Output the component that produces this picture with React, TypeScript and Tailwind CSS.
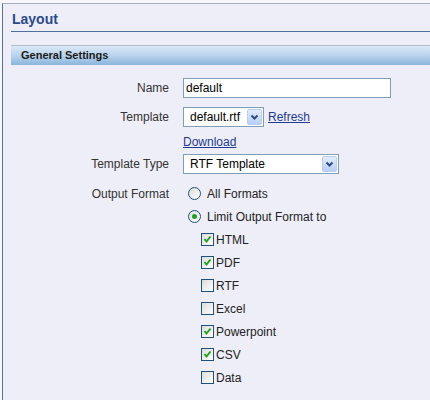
import React from 'react';

const font = { fontFamily: '"Liberation Sans", Arial, sans-serif' };

const Chevron = () => (
  <svg width="9" height="7" viewBox="0 0 9 7">
    <polyline points="1.5,1.5 4.5,4.5 7.5,1.5" fill="none" stroke="#2d4a86" strokeWidth="2" />
  </svg>
);

const DropButton = () => (
  <div className="w-[15px] h-[16px] mr-[1px] flex items-center justify-center border border-[#b8cdf0] bg-gradient-to-b from-[#e2ecfd] to-[#b9cff5] rounded-[2px]">
    <Chevron />
  </div>
);

const Select = ({ value, width }: { value: string; width: string }) => (
  <div className={`${width} h-[20px] flex items-center justify-between border border-[#7f9db9] bg-white text-[12px] text-black`}>
    <span className="pl-[6px]">{value}</span>
    <DropButton />
  </div>
);

const Radio = ({ checked }: { checked?: boolean }) => (
  <div className="w-[13px] h-[13px] rounded-full border border-[#1c5180] bg-gradient-to-br from-[#dcdcd7] to-white flex items-center justify-center">
    {checked && <div className="w-[5px] h-[5px] rounded-full bg-[#21a121]" />}
  </div>
);

const Check = ({ checked }: { checked?: boolean }) => (
  <div className="w-[13px] h-[13px] border border-[#1c5180] bg-gradient-to-br from-[#dcdcd7] to-white flex items-center justify-center">
    {checked && (
      <svg width="9" height="9" viewBox="0 0 9 9">
        <polyline points="1.5,4 3.5,6.5 7.5,1.5" fill="none" stroke="#21a121" strokeWidth="2" />
      </svg>
    )}
  </div>
);

const Row = ({ label, children, className = '' }: { label?: string; children: React.ReactNode; className?: string }) => (
  <div className={`flex items-center ${className}`}>
    <div className="w-[166px] text-right text-[12px] text-[#333]">{label}</div>
    <div className="ml-[14px] flex items-center">{children}</div>
  </div>
);

const formats: [string, boolean][] = [
  ['HTML', true],
  ['PDF', true],
  ['RTF', false],
  ['Excel', false],
  ['Powerpoint', true],
  ['CSV', true],
  ['Data', false],
];

export default function App() {
  return (
    <div className="w-[430px] h-[400px] bg-[#f7f7fb] pt-[3px] pl-[2px] overflow-hidden" style={font}>
      <div className="h-full border-t border-l border-t-[#a6afc0] border-l-[#55739c] bg-[#eeeef8]">
        {/* Header */}
        <div className="pl-[8px]">
          <div className="h-[28px] flex items-end border-b border-[#52709c] pb-[3px]">
            <h1 className="text-[14px] font-bold text-[#2b4a8b] leading-[18px] pl-[1px]">Layout</h1>
          </div>
          <div className="mt-[13px] h-[20px] flex items-center border-t border-[#b0bfcc] bg-gradient-to-b from-[#dbe9f6] via-[#b8d3eb] to-[#8ab5db] pl-[10px]">
            <span className="text-[11px] font-bold text-[#1a1a1a]">General Settings</span>
          </div>
        </div>

        {/* Form */}
        <div className="mt-[13px]">
          <Row label="Name">
            <div className="w-[208px] h-[20px] flex items-center border border-[#7f9db9] bg-white text-[12px] text-black pl-[2px]">
              default
            </div>
          </Row>
          <Row label="Template" className="mt-[9px]">
            <Select value="default.rtf" width="w-[81px]" />
            <a className="ml-[4px] text-[12px] text-[#1f3a8f] underline">Refresh</a>
          </Row>
          <Row className="mt-[5px] h-[20px]">
            <a className="text-[12px] text-[#1f3a8f] underline">Download</a>
          </Row>
          <Row label="Template Type" className="mt-[2px]">
            <Select value="RTF Template" width="w-[156px]" />
          </Row>

          <div className="mt-[8px]">
            <Row label="Output Format" className="h-[23px]">
              <div className="ml-[5px] flex items-center">
                <Radio />
                <span className="ml-[6px] text-[12px] text-[#222]">All Formats</span>
              </div>
            </Row>
            <Row className="h-[23px]">
              <div className="ml-[5px] flex items-center">
                <Radio checked />
                <span className="ml-[6px] text-[12px] text-[#222]">Limit Output Format to</span>
              </div>
            </Row>
            {formats.map(([name, on]) => (
              <Row key={name} className="h-[23px]">
                <div className="ml-[18px] flex items-center">
                  <Check checked={on} />
                  <span className="ml-[2px] text-[12px] text-[#222]">{name}</span>
                </div>
              </Row>
            ))}
          </div>
        </div>
      </div>
    </div>
  );
}
